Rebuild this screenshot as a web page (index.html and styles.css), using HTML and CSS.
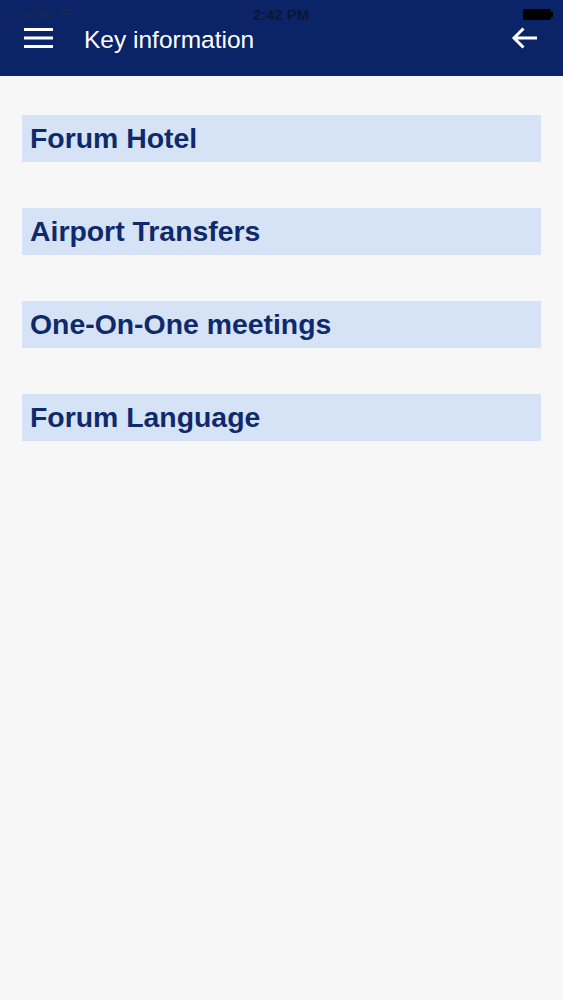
FILE: index.html
```html
<!DOCTYPE html>
<html lang="en">
<head>
  <meta charset="UTF-8">
  <meta name="viewport" content="width=device-width, initial-scale=1.0">
  <title>Key information</title>
  <link rel="stylesheet" href="styles.css">
</head>
<body>
  <div class="header">
    <div class="statusbar">
      <div class="carrier">Carrier
        <svg class="wifi" width="16" height="12" viewBox="0 0 16 12">
          <path d="M8 11.5 L5.6 8.6 A3.6 3.6 0 0 1 10.4 8.6 Z" fill="#1b2850"/>
          <path d="M3.6 6.6 A6.4 6.4 0 0 1 12.4 6.6" stroke="#1b2850" stroke-width="1.8" fill="none"/>
          <path d="M1.4 4.2 A9.6 9.6 0 0 1 14.6 4.2" stroke="#1b2850" stroke-width="1.8" fill="none"/>
        </svg>
      </div>
      <div class="time">2:42 PM</div>
      <div class="battery"><span class="battery-body"></span><span class="battery-tip"></span></div>
    </div>
    <div class="navbar">
      <svg class="menu" width="30" height="22" viewBox="0 0 30 22">
        <rect x="0" y="1" width="29" height="3" fill="#fff"/>
        <rect x="0" y="9.5" width="29" height="3" fill="#fff"/>
        <rect x="0" y="18" width="29" height="3" fill="#fff"/>
      </svg>
      <h1 class="title">Key information</h1>
      <svg class="back" width="28" height="24" viewBox="0 0 28 24">
        <path d="M26 12 H3 M12.5 2.5 L3 12 L12.5 21.5" stroke="#fff" stroke-width="3" fill="none"/>
      </svg>
    </div>
  </div>

  <div class="list">
    <div class="item">Forum Hotel</div>
    <div class="item">Airport Transfers</div>
    <div class="item">One-On-One meetings</div>
    <div class="item">Forum Language</div>
  </div>
</body>
</html>
```

FILE: styles.css
```css
body {
  margin: 0;
  font-family: "Liberation Sans", Arial, sans-serif;
  background-color: #f7f7f7;
}
.header {
  height: 76px;
  background-color: #0b2468;
}
.statusbar {
  display: flex;
  align-items: center;
  justify-content: space-between;
  height: 28px;
  padding: 0 10px 0 9px;
  font-size: 15px;
  color: #1b2850;
}
.carrier {
  display: flex;
  align-items: center;
  gap: 4px;
  width: 120px;
}
.time {
  font-weight: bold;
  color: #0d1735;
}
.battery {
  display: flex;
  align-items: center;
  justify-content: flex-end;
  width: 120px;
}
.battery-body {
  width: 28px;
  height: 11px;
  background-color: #000;
  border-radius: 2px;
}
.battery-tip {
  width: 2px;
  height: 5px;
  background-color: #000;
}
.navbar {
  display: flex;
  align-items: center;
  height: 20px;
  padding: 0 24px 0 24px;
}
.menu {
  margin-right: 30px;
}
.title {
  flex: 1;
  margin: 0;
  padding-top: 3px;
  font-size: 24.5px;
  font-weight: normal;
  color: #fff;
}
.list {
  display: flex;
  flex-direction: column;
  gap: 46px;
  padding: 39px 22px 0 22px;
}
.item {
  height: 47px;
  display: flex;
  align-items: center;
  padding-left: 8px;
  background-color: #d6e2f6;
  color: #0f2a6b;
  font-size: 28.4px;
  font-weight: bold;
}
```
